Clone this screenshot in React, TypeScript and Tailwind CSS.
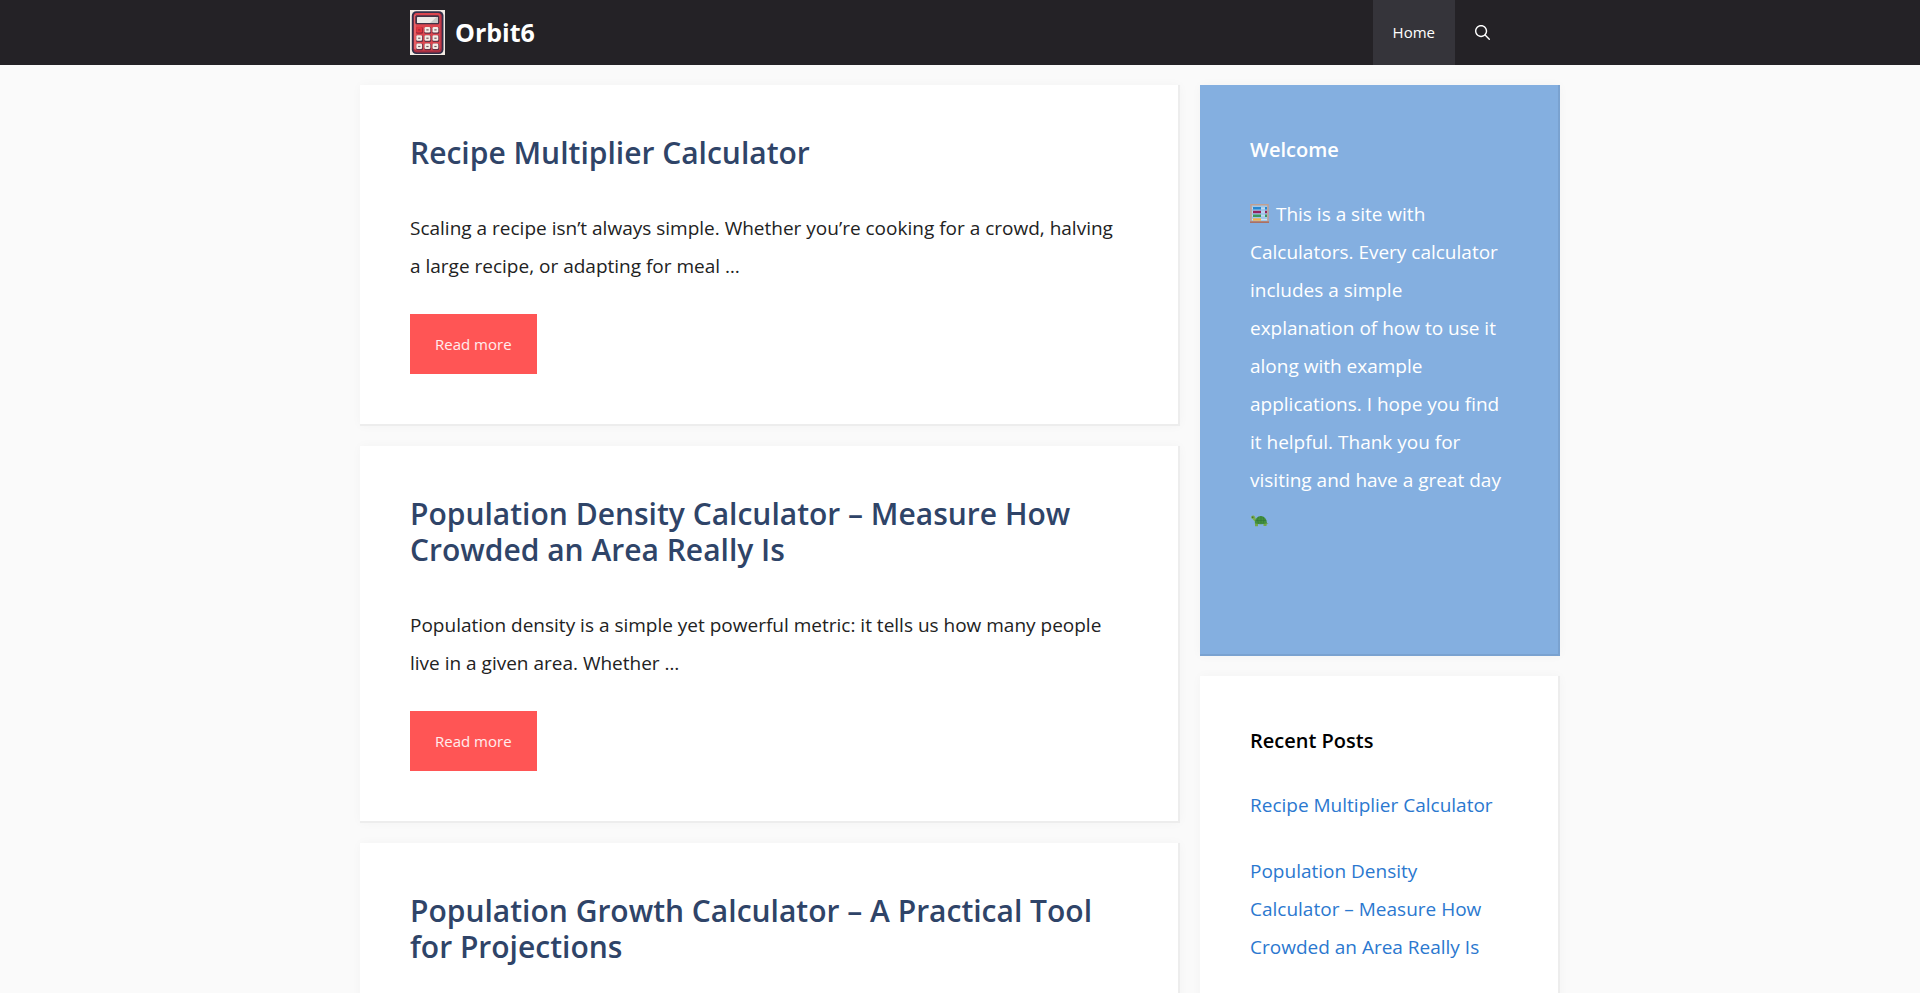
type Post = { title: string; excerpt?: string };

const posts: Post[] = [
  {
    title: "Recipe Multiplier Calculator",
    excerpt:
      "Scaling a recipe isn’t always simple. Whether you’re cooking for a crowd, halving a large recipe, or adapting for meal …",
  },
  {
    title: "Population Density Calculator – Measure How Crowded an Area Really Is",
    excerpt:
      "Population density is a simple yet powerful metric: it tells us how many people live in a given area. Whether …",
  },
  {
    title: "Population Growth Calculator – A Practical Tool for Projections",
  },
];

const recent = posts.slice(0, 2);

const card = "border-r-2 border-b-2 border-black/7 shadow-[0_0_10px_rgba(0,0,0,0.03)] p-[50px]";

function Logo() {
  return (
    <svg width="35" height="45" viewBox="0 0 35 45" aria-hidden="true">
      <rect width="35" height="45" fill="#f3ebe3" />
      <rect x="1.8" y="1.3" width="31.7" height="42.7" rx="4.5" fill="#34304a" />
      <rect x="3.5" y="3" width="28.3" height="39.5" rx="3.5" fill="#a82e40" />
      <rect x="4" y="3" width="26.5" height="37.5" rx="3" fill="#dc464f" />
      <path d="M5 5v34" stroke="#f0787a" />
      <rect x="5.3" y="5.2" width="24" height="9" rx="1.5" fill="#443246" />
      <rect x="7" y="7" width="21" height="6" rx="0.5" fill="#edebe7" />
      <path d="M20 13 26.5 7H28v6z" fill="#c9cbc9" />
      {[17, 25.3, 33.6].map((y) =>
        [6.3, 14.5, 22.5].map((x) => {
          const red = x === 6.3 && y === 17;
          return (
            <g key={`${x}-${y}`}>
              <rect x={x - 0.2} y={y} width="6.9" height="6.7" rx="1.5" fill={red ? "#98283a" : "#663044"} />
              <rect x={x} y={y} width="5.8" height="5.5" rx="1.3" fill={red ? "#e2363f" : "#f5ece6"} />
              <path d={`M${x + 1.8} ${y + 2.9}h2.3`} stroke={red ? "#a82535" : "#6f5a60"} strokeWidth="1.2" />
            </g>
          );
        }),
      )}
    </svg>
  );
}

function SearchIcon() {
  return (
    <svg viewBox="0 0 512 512" width="15" height="15" fill="currentColor" aria-hidden="true">
      <path
        fillRule="evenodd"
        clipRule="evenodd"
        d="M208 48c-88.366 0-160 71.634-160 160s71.634 160 160 160 160-71.634 160-160S296.366 48 208 48zM0 208C0 93.125 93.125 0 208 0s208 93.125 208 208c0 48.741-16.765 93.566-44.843 129.024l133.826 134.018c9.366 9.379 9.355 24.575-.025 33.941-9.379 9.366-24.575 9.355-33.941-.025L337.238 370.987C301.747 399.167 256.839 416 208 416 93.125 416 0 322.875 0 208z"
      />
    </svg>
  );
}

function Abacus() {
  return (
    <svg className="mr-0.5 inline-block align-[-2px]" width="19" height="19" viewBox="0 0 19 19" role="img" aria-label="abacus">
      <rect x="1" y="0.75" width="17" height="17" fill="#9fc7ea" stroke="#c1a091" strokeWidth="1.5" />
      <path d="M0 18.2h19" stroke="#a97065" strokeWidth="1.6" />
      <path d="M2 4.2h15M2 8h15M2 11.8h15M2 15.5h15" stroke="#dce9f2" strokeWidth="0.8" />
      <path d="M3 4.2h8M15 4.2h2" stroke="#2686cf" strokeWidth="2.4" />
      <path d="M3 8h8M15 8h2" stroke="#95205d" strokeWidth="2.4" />
      <path d="M3 11.8h8M15 11.8h2" stroke="#3b965d" strokeWidth="2.4" />
      <path d="M3 15.5h8" stroke="#f2b24b" strokeWidth="2.4" />
    </svg>
  );
}

function Turtle() {
  return (
    <svg className="inline-block align-[-5px]" width="19" height="19" viewBox="0 0 19 19" role="img" aria-label="turtle">
      <path d="M1 6.5C1 4.8 3 4 4.4 5c1 .8 1 3 2.4 4.6L5.5 11C3.8 10.5 3.5 8 1.8 7.8Z" fill="#79ad4b" />
      <path d="M5 12h11l2.5.5-2 1V15h-3v-2H8v2.2H5z" fill="#72a646" />
      <path d="M4.8 12.3C5 8 7.3 5 10.8 5s5.8 3 6.2 7.3c-3.8 1.2-8.6 1.2-12.2 0z" fill="#438f3d" />
      <path d="m8.5 6-1 3 1 3.5M13 6l1 3-1 3.5M5.5 9.5h10.8M11 5v7.5" fill="none" stroke="#2a7034" strokeWidth="0.5" />
      <circle cx="2.8" cy="6.2" r="0.6" fill="#263a2b" />
    </svg>
  );
}

export default function App() {
  return (
    <div className="h-screen overflow-hidden bg-[#fafafa] font-['Open_Sans',sans-serif] text-[19px] leading-[38px] text-[#222222]">
      <header className="bg-[#242226] text-white">
        <div className="mx-auto flex max-w-[1200px] items-center justify-between px-[50px]">
          <a href="#" className="flex items-center gap-2.5 text-[25px] leading-[37px] font-bold">
            <Logo />
            Orbit6
          </a>
          <nav className="flex text-[15px] leading-[65px]">
            <a href="#" className="bg-[#35343a] px-5">Home</a>
            <button aria-label="Open search" className="px-5">
              <SearchIcon />
            </button>
          </nav>
        </div>
      </header>

      <div className="mx-auto flex max-w-[1200px] items-start gap-5 pt-5">
        <main className="flex min-w-0 flex-1 flex-col gap-5">
          {posts.map((p) => (
            <article key={p.title} className={`${card} bg-white`}>
              <h2 className="mb-[38px] text-[30px] leading-9 font-semibold text-[#2f4468]">
                <a href="#">{p.title}</a>
              </h2>
              {p.excerpt && (
                <>
                  <p className="mb-[29px] pr-1">{p.excerpt}</p>
                  <a
                    href="#"
                    aria-label={`Read more about ${p.title}`}
                    className="block w-fit bg-[#ff5555] px-[25px] text-[15px] leading-[60px] text-white/90"
                  >
                    Read more
                  </a>
                </>
              )}
            </article>
          ))}
        </main>

        <aside className="flex w-[360px] shrink-0 flex-col gap-5">
          <section className={`${card} bg-[#84afe0] text-white`}>
            <h2 className="mb-[30px] text-xl leading-[30px] font-semibold">Welcome</h2>
            <p className="mb-[67px]">
              <Abacus /> This is a site with Calculators. Every calculator includes a simple explanation of how to use it
              along with example applications. I hope you find it helpful. Thank you for visiting and have a great day{" "}
              <Turtle />
            </p>
          </section>

          <section className={`${card} bg-white`}>
            <h2 className="mb-[30px] text-xl leading-[30px] font-semibold text-black">Recent Posts</h2>
            <ul className="flex flex-col gap-7 text-[#2b78cf]">
              {recent.map((p) => (
                <li key={p.title}>
                  <a href="#">{p.title}</a>
                </li>
              ))}
            </ul>
          </section>
        </aside>
      </div>
    </div>
  );
}
